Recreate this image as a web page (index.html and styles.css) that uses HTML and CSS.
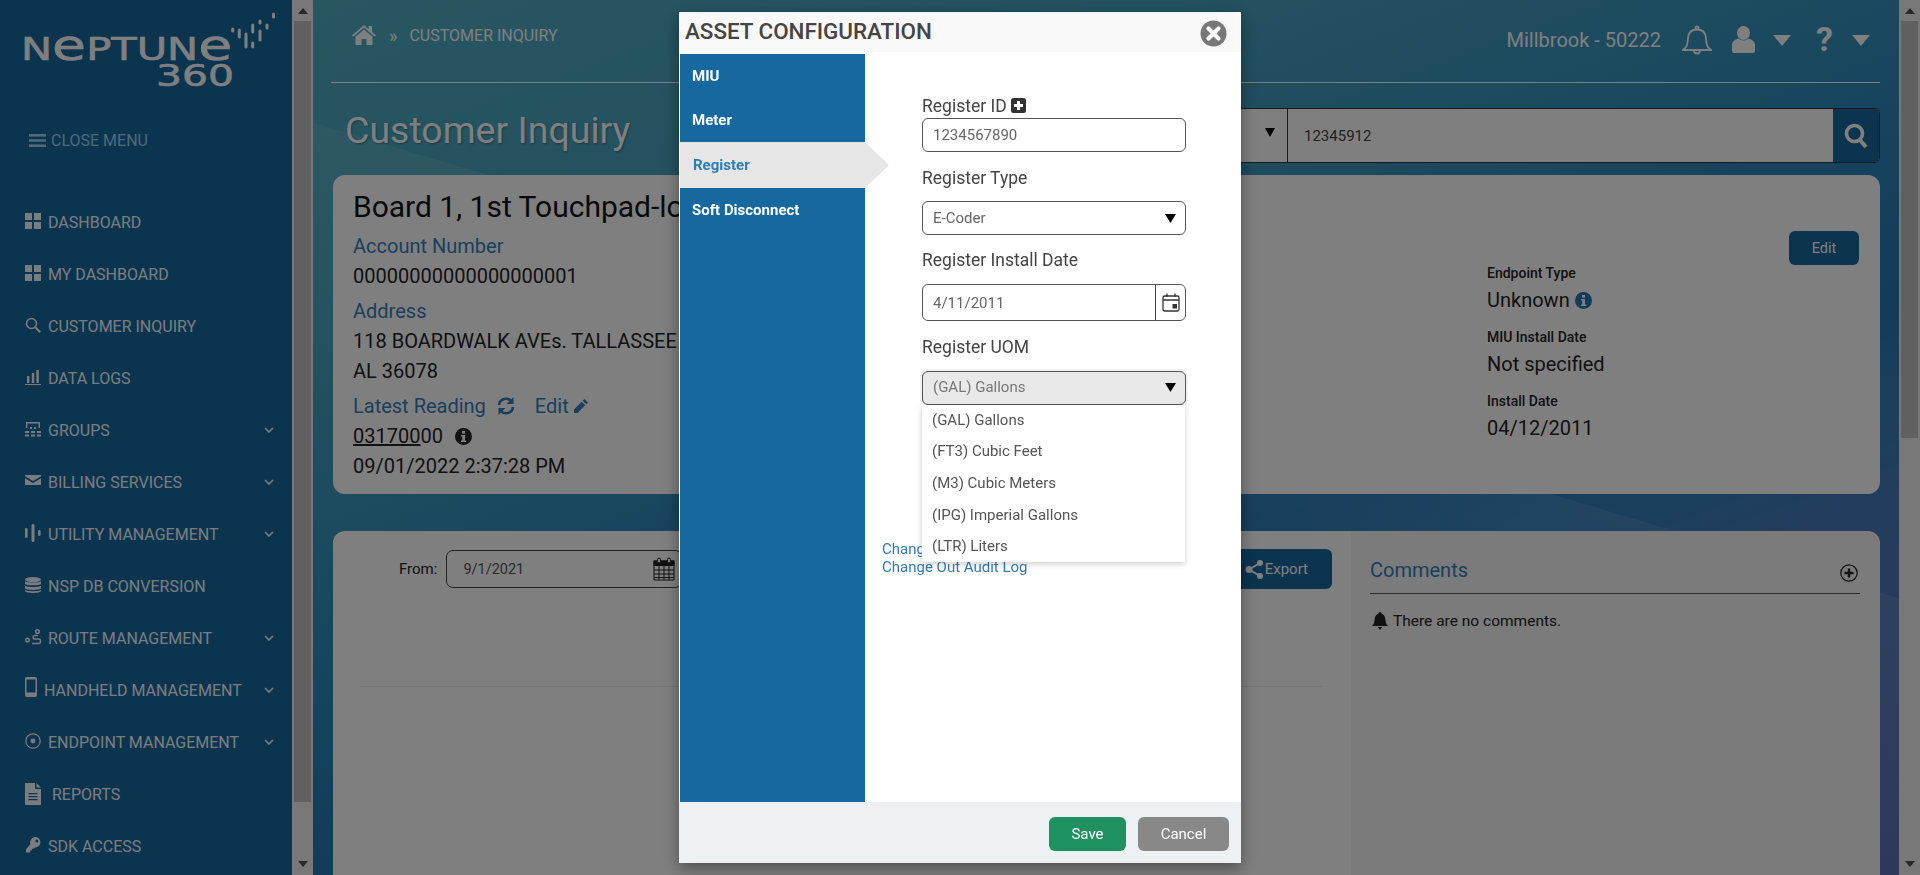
FILE: index.html
```html
<!DOCTYPE html>
<html lang="en">
<head>
  <meta charset="UTF-8" />
  <title>Customer Inquiry - Neptune 360</title>
  <link rel="stylesheet" href="styles.css">
</head>
<body>
  <aside class="sidebar">
    <div class="logo">
      <div class="logo-name">N<span class="logo-e">e</span>PTUN<span class="logo-e">e</span></div>
      <div class="logo-360">360</div>
      <svg class="logo-bars" width="46" height="38" viewBox="231 12 46 38" stroke="currentColor" stroke-width="3" stroke-linecap="round">
        <path d="M232.7 29v2M239.3 30v7M246 34v13M252.7 25v7M252.7 43v4M260 21v2M260 31v9M267 25v3M273.5 14v3"/>
      </svg>
    </div>

    <div class="close-menu">
      <svg width="17" height="13" viewBox="0 0 17 13" fill="currentColor"><rect width="17" height="2.6"/><rect y="5.2" width="17" height="2.6"/><rect y="10.4" width="17" height="2.6"/></svg>
      <span>CLOSE MENU</span>
    </div>

    <nav class="side-nav">
      <a class="side-item">
        <svg class="ico" viewBox="0 0 16 16" fill="currentColor"><rect width="7" height="7"/><rect x="9" width="7" height="7"/><rect y="9" width="7" height="7"/><rect x="9" y="9" width="7" height="7"/></svg>
        DASHBOARD
      </a>
      <a class="side-item">
        <svg class="ico" viewBox="0 0 16 16" fill="currentColor"><rect width="7" height="7"/><rect x="9" width="7" height="7"/><rect y="9" width="7" height="7"/><rect x="9" y="9" width="7" height="7"/></svg>
        MY DASHBOARD
      </a>
      <a class="side-item">
        <svg class="ico" viewBox="0 0 16 16" fill="none" stroke="currentColor"><circle cx="6.5" cy="6.5" r="5" stroke-width="1.5"/><path d="M10.2 10.2l5 5" stroke-width="2"/></svg>
        CUSTOMER INQUIRY
      </a>
      <a class="side-item">
        <svg class="ico" viewBox="0 0 16 16" fill="currentColor"><rect x="2" y="7" width="2.4" height="7"/><rect x="6.8" y="4" width="2.4" height="10"/><rect x="11.4" y="1" width="2.4" height="13"/><rect y="15" width="16" height="1"/></svg>
        DATA LOGS
      </a>
      <a class="side-item">
        <svg class="ico" viewBox="0 0 16 16" fill="currentColor"><path d="M1 1h14v6h-1.4V2.4H2.4V7H1z"/><rect x="5" y="6" width="2" height="2"/><rect x="9" y="6" width="2" height="2"/><rect y="10" width="4" height="2"/><rect x="6" y="10" width="4" height="2"/><rect x="12" y="10" width="4" height="2"/><rect y="13.5" width="4" height="2"/><rect x="6" y="13.5" width="4" height="2"/><rect x="12" y="13.5" width="4" height="2"/></svg>
        GROUPS
        <svg class="chev" viewBox="0 0 10 6" fill="none" stroke="currentColor" stroke-width="1.6"><path d="M1 1l4 4 4-4"/></svg>
      </a>
      <a class="side-item">
        <svg class="ico" viewBox="0 0 16 16" fill="currentColor"><path d="M0 2h16v1.2L8 8 0 3.2z"/><path d="M0 5.2L8 10l8-4.8V12H0z"/></svg>
        BILLING SERVICES
        <svg class="chev" viewBox="0 0 10 6" fill="none" stroke="currentColor" stroke-width="1.6"><path d="M1 1l4 4 4-4"/></svg>
      </a>
      <a class="side-item">
        <svg class="ico" viewBox="0 0 16 16" fill="currentColor"><rect y="3" width="2.6" height="10" rx="1.3"/><rect x="6.5" y="-1" width="3" height="18" rx="1.5"/><rect x="13" y="5" width="2.6" height="6" rx="1.3"/></svg>
        UTILITY MANAGEMENT
        <svg class="chev" viewBox="0 0 10 6" fill="none" stroke="currentColor" stroke-width="1.6"><path d="M1 1l4 4 4-4"/></svg>
      </a>
      <a class="side-item">
        <svg class="ico" viewBox="0 0 16 16" fill="currentColor"><ellipse cx="8" cy="2.6" rx="8" ry="2.6"/><path d="M0 4.2c1.5 1.6 14.500 1.600 16 0V7c-1.500 1.800-14.500 1.800-16 0z"/><path d="M0 8.800c1.500 1.600 14.500 1.600 16 0v2.800c-1.500 1.800-14.500 1.800-16 0z"/><path d="M0 13c1.500 1.600 14.500 1.600 16 0v1c-1 2.600-15 2.600-16 0z"/></svg>
        NSP DB CONVERSION
      </a>
      <a class="side-item">
        <svg class="ico" viewBox="0 0 16 16" fill="none" stroke="currentColor" stroke-width="1.500"><circle cx="2.500" cy="11" r="1.800"/><circle cx="12.500" cy="2.500" r="1.800"/><path d="M7 14.500h7c2 0 2-4.500 0-4.500H9.500c-1.800 0-1.800-3.500 0-3.500h3.500"/></svg>
        ROUTE MANAGEMENT
        <svg class="chev" viewBox="0 0 10 6" fill="none" stroke="currentColor" stroke-width="1.6"><path d="M1 1l4 4 4-4"/></svg>
      </a>
      <a class="side-item">
        <svg class="ico-phone" viewBox="0 0 12 20"><path fill="currentColor" fill-rule="evenodd" d="M2 0h8a2 2 0 012 2v16a2 2 0 01-2 2H2a2 2 0 01-2-2V2a2 2 0 012-2zM1.500 2.500v13h9v-13z"/></svg>
        HANDHELD MANAGEMENT
        <svg class="chev" viewBox="0 0 10 6" fill="none" stroke="currentColor" stroke-width="1.6"><path d="M1 1l4 4 4-4"/></svg>
      </a>
      <a class="side-item">
        <svg class="ico" viewBox="0 0 16 16" fill="none" stroke="currentColor" stroke-width="1.200"><circle cx="8" cy="8" r="7.200"/><circle cx="8" cy="8" r="2.400" fill="currentColor" stroke="none"/></svg>
        ENDPOINT MANAGEMENT
        <svg class="chev" viewBox="0 0 10 6" fill="none" stroke="currentColor" stroke-width="1.6"><path d="M1 1l4 4 4-4"/></svg>
      </a>
      <a class="side-item">
        <svg class="ico-file" viewBox="0 0 16 22"><path fill="currentColor" fill-rule="evenodd" d="M0 0h10v6h6v16H0zM3.500 10v1.300h9V10zM3.500 13v1.300h9V13zM3.500 16v1.300h9V16z"/><path fill="currentColor" d="M11.500 0L16 4.500h-4.500z"/></svg>
        REPORTS
      </a>
      <a class="side-item">
        <svg class="ico" viewBox="0 0 16 16" fill="currentColor"><path fill-rule="evenodd" d="M10.500 0A5.200 5.200 0 1110 10.400L8.600 11.800H6.800v1.800H5v1.800H1v-3.200L5.500 7A5.200 5.200 0 0110.500 0zm1.300 2.500a1.500 1.500 0 100 3 1.500 1.500 0 000-3z"/></svg>
        SDK ACCESS
      </a>
    </nav>
  </aside>

  <div class="scrollbar">
    <svg class="scroll-arrow" width="10" height="6" viewBox="0 0 10 6"><polygon points="5,0 10,6 0,6"/></svg>
    <div class="scroll-thumb scroll-thumb-side"></div>
    <svg class="scroll-arrow scroll-arrow-end" width="10" height="6" viewBox="0 0 10 6"><polygon points="0,0 10,0 5,6"/></svg>
  </div>

  <main class="main">
    <header class="topbar">
      <div class="crumbs">
        <svg class="home" width="24" height="20" viewBox="0 0 24 20" fill="currentColor"><path d="M12 0L0 10.500l1.300 1.300L12 2.600l10.700 9.200 1.300-1.300-4-3.500V1h-3.400v3.600z"/><path d="M12 4.500L3.500 11.800V20h6v-6h5v6h6v-8.200z"/></svg>
        <span class="crumb-sep">»</span>
        <span>CUSTOMER INQUIRY</span>
      </div>
      <div class="top-right">
        <span class="site-name">Millbrook - 50222</span>
        <svg width="30" height="31" viewBox="0 0 30 31" fill="none" stroke="currentColor" stroke-width="1.800"><path d="M1 25c4.500-3 4.500-6 5-12C6.500 7 10 4.500 15 4.500S23.500 7 24 13c.5 6 .5 9 5 12z"/><circle cx="15" cy="2.800" r="1.500"/><path d="M12 25.500a3 3 0 006 0"/></svg>
        <svg class="user-ico" width="23" height="27" viewBox="0 0 23 27" fill="currentColor"><ellipse cx="11.500" cy="7" rx="6.500" ry="7"/><path d="M0 19c0-4 4-6 6.500-6.500 3 2.500 7 2.500 10 0C19 13 23 15 23 19v6a2 2 0 01-2 2H2a2 2 0 01-2-2z"/></svg>
        <svg class="tri" width="18" height="11" viewBox="0 0 18 11" fill="currentColor"><polygon points="0,0 18,0 9,11"/></svg>
        <span class="help-ico">?</span>
        <svg class="tri" width="18" height="11" viewBox="0 0 18 11" fill="currentColor"><polygon points="0,0 18,0 9,11"/></svg>
      </div>
    </header>

    <div class="title-row">
      <h1 class="page-title">Customer Inquiry</h1>
      <div class="search">
        <div class="search-type">
          <svg width="10" height="9" viewBox="0 0 10 9"><polygon points="0,0 10,0 5,9"/></svg>
        </div>
        <div class="search-value">12345912</div>
        <div class="search-btn">
          <svg width="24" height="26" viewBox="0 0 24 26" fill="none" stroke="currentColor"><circle cx="10.500" cy="10.500" r="8" stroke-width="3.600"/><path d="M16 17l6 7" stroke-width="4"/></svg>
        </div>
      </div>
    </div>

    <section class="card account-card">
      <div class="account-info">
        <h2 class="account-name">Board 1, 1st Touchpad-local</h2>
        <div class="info-group">
          <div class="info-label">Account Number</div>
          <div>00000000000000000001</div>
        </div>
        <div class="info-group">
          <div class="info-label">Address</div>
          <div>118 BOARDWALK AVEs. TALLASSEE</div>
          <div>AL 36078</div>
        </div>
        <div class="info-group">
          <div class="info-label reading-head">
            Latest Reading
            <svg class="refresh" width="18" height="18" viewBox="0 0 18 18" fill="none" stroke="currentColor" stroke-width="2.600"><path d="M2 8a7 7 0 0112.500-3.500"/><path d="M16 10a7 7 0 01-12.500 3.500"/><path fill="currentColor" stroke="none" d="M16.500 0v7h-7zM1.500 18v-7h7z"/></svg>
            <span class="edit-link">Edit</span>
            <svg width="16" height="16" viewBox="0 0 16 16" fill="currentColor"><path d="M11.500 1l3.500 3.500-1.800 1.800-3.500-3.500zM8.700 3.800l3.500 3.500-7.700 7.700H1v-3.500z"/></svg>
          </div>
          <div class="reading-value"><span class="underlined">031700</span>00
            <svg class="info-ico" width="17" height="17" viewBox="0 0 17 17"><circle cx="8.500" cy="8.500" r="8.500" fill="currentColor"/><rect x="7" y="3" width="3" height="2.600" fill="#fff"/><path d="M6 7h4v5.500h1.200V14H6v-1.500h1.200v-4H6z" fill="#fff"/></svg>
          </div>
          <div>09/01/2022 2:37:28 PM</div>
        </div>
      </div>
      <div class="endpoint-info">
        <div class="ep-label">Endpoint Type</div>
        <div class="ep-value">Unknown
          <svg class="info-blue" width="17" height="17" viewBox="0 0 17 17"><circle cx="8.500" cy="8.500" r="8.500" fill="currentColor"/><rect x="7" y="3" width="3" height="2.600" fill="#fff"/><path d="M6 7h4v5.500h1.200V14H6v-1.500h1.200v-4H6z" fill="#fff"/></svg>
        </div>
        <div class="ep-label">MIU Install Date</div>
        <div class="ep-value">Not specified</div>
        <div class="ep-label">Install Date</div>
        <div class="ep-value">04/12/2011</div>
      </div>
      <button class="btn-edit">Edit</button>
    </section>

    <section class="card history-card">
      <div class="history">
        <div class="history-tools">
          <label class="from-label">From:</label>
          <div class="from-input">
            <span>9/1/2021</span>
            <svg width="22" height="24" viewBox="0 0 22 24" fill="none" stroke="currentColor"><path d="M1 4h20v19H1z" stroke-width="1"/><path d="M0.500 3.500h21V9H0.500z" fill="currentColor" stroke="none"/><path d="M1 13h20M1 17h20M1 20.500h20M6 9v14M11 9v14M16 9v14" stroke-width="1"/><rect x="4.500" y="1" width="3" height="5" rx="1.500" fill="#fff" stroke-width="1"/><rect x="14.500" y="1" width="3" height="5" rx="1.500" fill="#fff" stroke-width="1"/></svg>
          </div>
          <button class="btn-export">
            <svg width="19" height="21" viewBox="0 0 19 21" fill="currentColor" stroke="currentColor"><path d="M15 4L4 10.500 15 17" fill="none" stroke-width="2"/><circle cx="15" cy="4" r="3" stroke="none"/><circle cx="4" cy="10.500" r="3.500" stroke="none"/><circle cx="15" cy="17" r="3" stroke="none"/></svg>
            Export
          </button>
        </div>
        <div class="history-rule"></div>
      </div>
      <div class="comments">
        <div class="comments-head">
          <span class="comments-title">Comments</span>
          <svg class="comments-add" width="18" height="18" viewBox="0 0 18 18" fill="none" stroke="#222"><circle cx="9" cy="9" r="8.200" stroke-width="1.200"/><path d="M9 4.500v9M4.500 9h9" stroke-width="2.400"/></svg>
        </div>
        <div class="no-comments">
          <svg width="16" height="18" viewBox="0 0 16 18" fill="currentColor"><path d="M8 0c1 0 1.500.8 1.500 1.500C12 2.500 13 4.500 13.300 7c.3 3 .8 5 2.700 7H0c1.900-2 2.400-4 2.700-7C3 4.500 4 2.500 6.500 1.500 6.500.8 7 0 8 0z"/><path d="M5.800 15h4.400L8 18z"/></svg>
          There are no comments.
        </div>
      </div>
    </section>
  </main>

  <div class="scrollbar">
    <svg class="scroll-arrow" width="10" height="6" viewBox="0 0 10 6"><polygon points="5,0 10,6 0,6"/></svg>
    <div class="scroll-thumb scroll-thumb-main"></div>
    <svg class="scroll-arrow scroll-arrow-end" width="10" height="6" viewBox="0 0 10 6"><polygon points="0,0 10,0 5,6"/></svg>
  </div>

  <div class="backdrop">
    <div class="modal">
      <div class="modal-head">
        <span class="modal-title">ASSET CONFIGURATION</span>
        <svg class="modal-close" width="27" height="27" viewBox="0 0 27 27"><circle cx="13.500" cy="13.500" r="13" fill="#777"/><path d="M8.500 8.500l10 10M18.500 8.500l-10 10" stroke="#fff" stroke-width="4.200" stroke-linecap="round"/></svg>
      </div>
      <div class="modal-body">
        <ul class="asset-tabs">
          <li>MIU</li>
          <li>Meter</li>
          <li class="active">Register</li>
          <li>Soft Disconnect</li>
        </ul>
        <div class="asset-form">
          <div class="field">
            <div class="field-label field-label-tight">Register ID
              <svg class="add-ico" width="15" height="15" viewBox="0 0 15 15"><rect width="15" height="15" rx="2.500" fill="#333"/><path d="M7.500 3v9M3 7.500h9" stroke="#fff" stroke-width="3"/></svg>
            </div>
            <div class="control">1234567890</div>
          </div>
          <div class="field">
            <div class="field-label">Register Type</div>
            <div class="control control-select">E-Coder
              <svg width="11" height="9" viewBox="0 0 11 9"><polygon points="0,0 11,0 5.500,9"/></svg>
            </div>
          </div>
          <div class="field field-date">
            <div class="field-label">Register Install Date</div>
            <div class="control control-date">
              <span class="date-text">4/11/2011</span>
              <span class="date-btn">
                <svg width="18" height="19" viewBox="0 0 18 19" fill="none" stroke="#333" stroke-width="1.300"><rect x="1" y="3" width="16" height="15" rx="1.500"/><path d="M1 7h16M5 0.500v3.500M13 0.500v3.500"/><rect x="10.500" y="11" width="4.500" height="4.500" fill="#333" stroke="none"/></svg>
              </span>
            </div>
          </div>
          <div class="field field-open">
            <div class="field-label">Register UOM</div>
            <div class="control control-select control-focus">(GAL) Gallons
              <svg width="11" height="9" viewBox="0 0 11 9"><polygon points="0,0 11,0 5.500,9"/></svg>
            </div>
            <ul class="dropdown">
              <li>(GAL) Gallons</li>
              <li>(FT3) Cubic Feet</li>
              <li>(M3) Cubic Meters</li>
              <li>(IPG) Imperial Gallons</li>
              <li>(LTR) Liters</li>
            </ul>
          </div>
          <div class="audit-links">
            <a>Change Out History</a>
            <a>Change Out Audit Log</a>
          </div>
        </div>
      </div>
      <div class="modal-foot">
        <button class="btn-save">Save</button>
        <button class="btn-cancel">Cancel</button>
      </div>
    </div>
  </div>
</body>
</html>
```

FILE: styles.css
```css
* {
  box-sizing: border-box;
}

body {
  margin: 0;
  height: 100vh;
  display: flex;
  overflow: hidden;
  font-family: 'Roboto', 'Liberation Sans', sans-serif;
  color: #222;
}

ul {
  list-style: none;
  margin: 0;
  padding: 0;
}

button {
  border: none;
  font-family: inherit;
  color: #fff;
}

/* left menu */
.sidebar {
  width: 292px;
  flex: none;
  background-color: #17689f;
  color: #f4fbff;
  position: relative;
}

.logo {
  height: 130px;
  position: relative;
  color: #fff;
}

.logo-name,
.logo-360 {
  position: absolute;
  font-family: 'DejaVu Sans', sans-serif;
  transform-origin: left top;
  white-space: nowrap;
  -webkit-text-stroke: 0.6px #fff;
}

.logo-name {
  left: 21px;
  top: 36px;
  font-size: 32px;
  line-height: 26px;
  transform: scaleX(1.3);
}

.logo-e {
  font-size: 1.33em;
  line-height: 0;
}

.logo-360 {
  left: 156px;
  top: 64px;
  font-size: 30px;
  line-height: 24px;
  transform: scaleX(1.36);
}

.logo-bars {
  position: absolute;
  left: 231px;
  top: 12px;
}

.close-menu {
  display: flex;
  align-items: center;
  gap: 5px;
  margin-top: 1px;
  padding-left: 29px;
  height: 18px;
  font-size: 16px;
  color: #9fd3f5;
}

.side-nav {
  margin-top: 47px;
  padding-left: 25px;
}

.side-item {
  display: flex;
  align-items: center;
  gap: 7px;
  height: 52px;
  font-size: 16px;
  padding-right: 18px;
}

.ico {
  width: 16px;
  height: 16px;
  flex: none;
  margin-bottom: 2px;
  overflow: visible;
}

.ico-phone {
  width: 12px;
  height: 20px;
  flex: none;
  margin-bottom: 6px;
}

.ico-file {
  width: 16px;
  height: 22px;
  flex: none;
  margin-right: 4px;
}

.chev {
  width: 10px;
  height: 6px;
  margin-left: auto;
  flex: none;
}

/* scroll bars */
.scrollbar {
  width: 21px;
  flex: none;
  background-color: #f1f1f1;
  display: flex;
  flex-direction: column;
  align-items: center;
  padding-top: 8px;
  fill: #505050;
}

.scroll-thumb {
  width: 17px;
  margin-top: 7px;
  background-color: #c1c1c1;
}

.scroll-thumb-side {
  height: 781px;
}

.scroll-thumb-main {
  height: 417px;
}

.scroll-arrow {
  flex: none;
}

.scroll-arrow-end {
  margin-top: auto;
  margin-bottom: 8px;
}

/* page */
.main {
  flex: 1;
  min-width: 0;
  padding: 0 19px 0 18px;
  overflow: hidden;
  color: #fff;
  background:
    linear-gradient(196.7deg, transparent 44.3%, rgba(255, 255, 255, 0.08) 44.3%, transparent 65%),
    linear-gradient(160deg, #50aec4 0%, #46a2c0 25%, #2a86bc 50%, #2678b4 60%, #3680bc 68%, #487aba 75%, #6070b6 100%);
}

.topbar {
  height: 83px;
  display: flex;
  justify-content: space-between;
  border-bottom: 1px solid #fff;
}

.crumbs {
  display: flex;
  align-items: center;
  height: 70px;
  padding-left: 21px;
  font-size: 16px;
}

.crumb-sep {
  margin: 0 12px 0 13px;
  font-size: 18px;
}

.top-right {
  display: flex;
  align-items: center;
  height: 80px;
  font-size: 20px;
  padding-right: 10px;
}

.site-name {
  margin-right: 21px;
}

.user-ico {
  margin-left: 20px;
  margin-bottom: 2px;
}

.tri {
  margin-left: 18px;
}

.help-ico {
  margin-left: 25px;
  margin-bottom: 2px;
  width: 18px;
  font-size: 34px;
  font-weight: 700;
  line-height: 1;
}

.title-row {
  display: flex;
  justify-content: space-between;
  margin-top: 25px;
  height: 55px;
}

.page-title {
  margin: 0 0 0 14px;
  font-size: 37.500px;
  font-weight: 400;
  line-height: 44px;
  text-shadow: 1px 1px 2px rgba(0, 0, 0, 0.3);
}

.search {
  width: 780px;
  display: flex;
  border: 1px solid #333;
  border-radius: 5px;
  background-color: #fff;
  overflow: hidden;
  color: #444;
  font-size: 15px;
}

.search-type {
  width: 187px;
  flex: none;
  display: flex;
  align-items: center;
  justify-content: flex-end;
  padding: 0 12px 6px 0;
  border-right: 1px solid #333;
}

.search-value {
  flex: 1;
  display: flex;
  align-items: center;
  padding-left: 16px;
}

.search-btn {
  width: 46px;
  flex: none;
  display: flex;
  align-items: center;
  justify-content: center;
  background-color: #17689f;
  color: #fff;
}

/* cards */
.card {
  margin-left: 2px;
  margin-right: 0;
  background-color: #fff;
  border-radius: 12px;
  color: #222;
}

.account-card {
  margin-top: 12px;
  height: 319px;
  display: flex;
  padding-left: 20px;
  padding-right: 21px;
  font-size: 20px;
  line-height: 30px;
}

.account-info {
  flex: 1;
  padding-top: 12px;
  min-width: 0;
}

.account-name {
  margin: 0;
  font-size: 30px;
  font-weight: 400;
  line-height: 39px;
  color: #111;
}

.info-group {
  margin-top: 5px;
}

.info-label {
  color: #357fb8;
}

.reading-head {
  display: flex;
  align-items: center;
}

.refresh {
  margin: 0 20px 0 11px;
}

.edit-link {
  margin-right: 4px;
}

.underlined {
  text-decoration: underline;
}

.info-ico {
  margin-left: 7px;
  vertical-align: -2px;
}

.endpoint-info {
  width: 302px;
  flex: none;
  padding-top: 88px;
}

.ep-label {
  font-size: 14px;
  font-weight: 500;
  line-height: 20px;
  margin-bottom: 2px;
}

.ep-value {
  margin-bottom: 12px;
  line-height: 30px;
}

.ep-value:last-child {
  margin-bottom: 0;
}

.info-blue {
  color: #2477b3;
  vertical-align: -2px;
}

.btn-edit {
  flex: none;
  width: 70px;
  height: 34px;
  margin-top: 56px;
  background-color: #17689f;
  border-radius: 6px;
  font-size: 14.500px;
}

.history-card {
  margin-top: 37px;
  height: 500px;
  display: flex;
}

.history {
  flex: 1;
  min-width: 0;
}

.history-tools {
  display: flex;
  align-items: flex-start;
  padding: 19px 19px 0 66px;
}

.from-label {
  font-size: 15px;
  line-height: 38px;
  margin-right: 9px;
}

.from-input {
  width: 236px;
  height: 38px;
  display: flex;
  align-items: center;
  justify-content: space-between;
  padding: 0 6px 0 16px;
  border: 1px solid #444;
  border-radius: 7px;
  font-size: 14.500px;
  color: #555;
}

.from-input svg {
  color: #222;
}

.btn-export {
  margin-left: auto;
  margin-top: -1px;
  width: 110px;
  height: 40px;
  display: flex;
  align-items: center;
  justify-content: flex-end;
  gap: 1px;
  padding: 0 24px 0 0;
  background-color: #17689f;
  border-radius: 6px;
  font-size: 15px;
}

.history-rule {
  margin: 97px 29px 0 27px;
  border-top: 1px solid rgba(0, 0, 0, 0.08);
}

.comments {
  width: 529px;
  flex: none;
  padding: 0 20px 0 19px;
  background-color: rgba(0, 0, 0, 0.03);
  border-radius: 0 12px 0 0;
}

.comments-head {
  display: flex;
  align-items: center;
  justify-content: space-between;
  height: 63px;
  padding: 16px 2px 0 0;
  border-bottom: 1px solid #555;
}

.comments-title {
  font-size: 20px;
  color: #357fb8;
}

.comments-add {
  margin-top: 5px;
}

.no-comments {
  display: flex;
  align-items: center;
  gap: 5px;
  margin-top: 17px;
  padding-left: 2px;
  font-size: 15.500px;
  line-height: 20px;
}

/* modal */
.backdrop {
  position: fixed;
  inset: 0;
  display: flex;
  justify-content: center;
  padding-top: 12px;
  background-color: rgba(0, 0, 0, 0.5);
}

.modal {
  width: 562px;
  height: 851px;
  display: flex;
  flex-direction: column;
  background-color: #fff;
  box-shadow: 0 5px 15px rgba(0, 0, 0, 0.4);
  color: #444;
}

.modal-head {
  height: 40px;
  flex: none;
  display: flex;
  align-items: center;
  justify-content: space-between;
  padding: 0 14px 0 6px;
  background-color: #f9f9f9;
}

.modal-title {
  font-size: 22.400px;
  font-weight: 500;
  margin-bottom: 2px;
}

.modal-close {
  margin-top: 3px;
}

.modal-body {
  flex: 1;
  display: flex;
  margin-top: 2px;
  padding-left: 1px;
  min-height: 0;
}

.asset-tabs {
  width: 185px;
  flex: none;
  background-color: #16689e;
  color: #fff;
  font-size: 15px;
  font-weight: 700;
}

.asset-tabs li {
  display: flex;
  align-items: center;
  height: 44px;
  padding-left: 12px;
}

.asset-tabs .active {
  position: relative;
  height: 46px;
  padding-left: 13px;
  background-color: #e6e6e6;
  color: #2e7fb5;
}

.asset-tabs .active::after {
  content: "";
  position: absolute;
  left: 100%;
  top: 0;
  border-style: solid;
  border-width: 23px 0 23px 24px;
  border-color: transparent transparent transparent #e6e6e6;
}

.asset-form {
  padding: 40px 0 0 57px;
  width: 321px;
}

.field {
  margin-bottom: 14px;
  position: relative;
}

.field-date {
  margin-bottom: 15px;
}

.field-label {
  font-size: 17.500px;
  line-height: 24px;
  margin-bottom: 11px;
}

.field-label-tight {
  margin-bottom: 0;
}

.field-date .field-label,
.field-open .field-label {
  margin-top: -1px;
  margin-bottom: 12px;
}

.add-ico {
  vertical-align: -1px;
}

.control {
  height: 34px;
  display: flex;
  align-items: center;
  justify-content: space-between;
  padding: 0 9px 0 10px;
  border: 1px solid #555;
  border-radius: 6px;
  font-size: 15px;
  color: #666;
}

.control-date {
  height: 37px;
  padding: 0 0 0 10px;
}

.date-btn {
  width: 30px;
  height: 100%;
  display: flex;
  align-items: center;
  justify-content: center;
  border-left: 1px solid #444;
}

.control-focus {
  background-color: #e9e9e9;
  box-shadow: 0 0 0 2px #f2f2f2;
  color: #777;
  padding-bottom: 2px;
}

.dropdown {
  position: absolute;
  left: 0;
  right: 1px;
  top: 70px;
  height: 157px;
  background-color: #fff;
  box-shadow: 0 2px 6px rgba(0, 0, 0, 0.2);
  font-size: 15px;
  color: #555;
  z-index: 2;
}

.dropdown li {
  height: 31.600px;
  display: flex;
  align-items: center;
  padding-left: 10px;
}

.dropdown li:first-child {
  margin-top: -1px;
}

.audit-links {
  margin: 135px 0 0 -40px;
  font-size: 15px;
  line-height: 18px;
  color: #337ab7;
}

.audit-links a {
  display: block;
}

.modal-foot {
  height: 61px;
  flex: none;
  display: flex;
  justify-content: flex-end;
  align-items: flex-start;
  gap: 12px;
  padding: 15px 12px 0 0;
  background-color: #eef1f3;
}

.modal-foot button {
  height: 34px;
  border-radius: 6px;
  font-size: 15px;
}

.btn-save {
  width: 77px;
  background-color: #1f9060;
}

.btn-cancel {
  width: 91px;
  background-color: #888;
}
```
